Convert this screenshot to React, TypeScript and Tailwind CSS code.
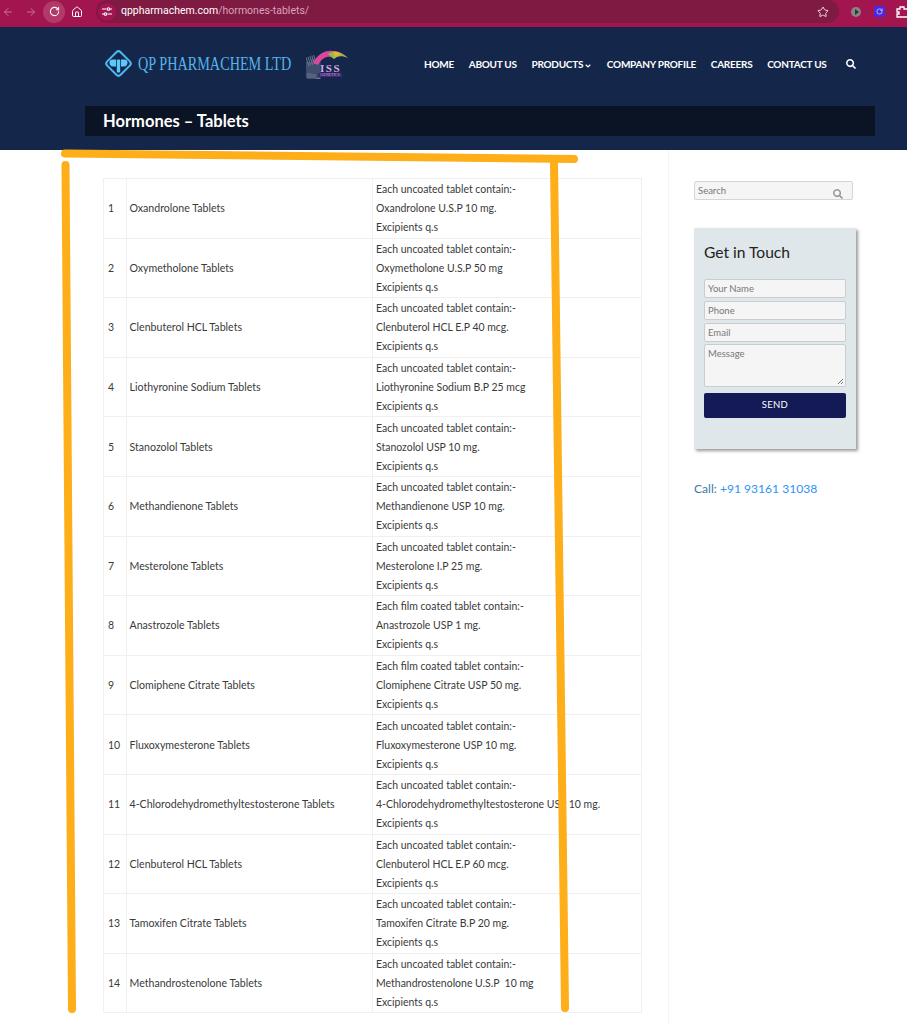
import React from 'react';
import { ArrowLeft, ArrowRight, RotateCw, House, Star } from 'lucide-react';
import { FaSearch, FaAngleDown } from 'react-icons/fa';

const rows = [
  ['Oxandrolone Tablets', 'Each uncoated tablet contain:-', 'Oxandrolone U.S.P 10 mg.'],
  ['Oxymetholone Tablets', 'Each uncoated tablet contain:-', 'Oxymetholone U.S.P 50 mg'],
  ['Clenbuterol HCL Tablets', 'Each uncoated tablet contain:-', 'Clenbuterol HCL E.P 40 mcg.'],
  ['Liothyronine Sodium Tablets', 'Each uncoated tablet contain:-', 'Liothyronine Sodium B.P 25 mcg'],
  ['Stanozolol Tablets', 'Each uncoated tablet contain:-', 'Stanozolol USP 10 mg.'],
  ['Methandienone Tablets', 'Each uncoated tablet contain:-', 'Methandienone USP 10 mg.'],
  ['Mesterolone Tablets', 'Each uncoated tablet contain:-', 'Mesterolone I.P 25 mg.'],
  ['Anastrozole Tablets', 'Each film coated tablet contain:-', 'Anastrozole USP 1 mg.'],
  ['Clomiphene Citrate Tablets', 'Each film coated tablet contain:-', 'Clomiphene Citrate USP 50 mg.'],
  ['Fluxoxymesterone Tablets', 'Each uncoated tablet contain:-', 'Fluxoxymesterone USP 10 mg.'],
  ['4-Chlorodehydromethyltestosterone Tablets', 'Each uncoated tablet contain:-', '4-Chlorodehydromethyltestosterone USP 10 mg.'],
  ['Clenbuterol HCL Tablets', 'Each uncoated tablet contain:-', 'Clenbuterol HCL E.P 60 mcg.'],
  ['Tamoxifen Citrate Tablets', 'Each uncoated tablet contain:-', 'Tamoxifen Citrate B.P 20 mg.'],
  ['Methandrostenolone Tablets', 'Each uncoated tablet contain:-', 'Methandrostenolone U.S.P  10 mg'],
];

const navItems = ['HOME', 'ABOUT US', 'PRODUCTS', 'COMPANY PROFILE', 'CAREERS', 'CONTACT US'];

const BrowserBar = () => (
  <div className="h-[27px] shrink-0 bg-[#a3154f] flex items-start text-[#e9c3d3]">
    <div className="flex items-center h-[23px] pl-[2px] w-[96px] shrink-0">
      <ArrowLeft size={12} className="text-[#cf6f96]" />
      <ArrowRight size={12} className="ml-[11px] text-[#cf6f96]" />
      <div className="ml-[6px] w-[22px] h-[22px] rounded-full bg-[#b23a6b] flex items-center justify-center">
        <RotateCw size={11} className="text-white" strokeWidth={2.2} />
      </div>
      <House size={12} className="ml-[6px] text-white" />
    </div>
    <div className="w-[743px] h-[23px] rounded-full bg-[#7f1a42] flex items-center shrink-0">
      <div className="w-[18px] h-[18px] ml-[2px] rounded-full bg-[#a3154f] flex items-center justify-center">
        <svg width="10" height="9" viewBox="0 0 10 9" fill="none" stroke="#ffffff" strokeWidth="1.100">
          <path d="M0 2h4.500M8 2h2M0 7h2M5.500 7H10" />
          <circle cx="6.500" cy="2" r="1.300" />
          <circle cx="3.500" cy="7" r="1.300" />
        </svg>
      </div>
      <div className="ml-[5px] text-[10.5px] leading-none font-['Roboto',sans-serif]">
        <span className="text-white">qppharmachem.com</span>
        <span className="text-[#d9a3ba]">/hormones-tablets/</span>
      </div>
      <Star size={12} className="ml-auto mr-[10px] text-[#f2dbe5]" />
    </div>
    <div className="flex items-center h-[23px]">
      <div className="ml-[12px] w-[10px] h-[10px] rounded-full bg-[#858585] flex items-center justify-center">
        <div className="ml-[1px] w-0 h-0 border-y-[3px] border-y-transparent border-l-[4px] border-l-[#333333]" />
      </div>
      <div className="ml-[13px] w-[11px] h-[11px] rounded-[2px] bg-[#4a2ae0] flex items-center justify-center">
        <RotateCw size={7} className="text-white" />
      </div>
      <svg width="14" height="12" viewBox="0 0 14 12" fill="none" stroke="#ffffff" strokeWidth="1.300" className="ml-[11px]">
        <path d="M1 3h3V1h4v2h5v8H1V8h2V6H1z" />
      </svg>
    </div>
  </div>
);

const Logo = () => (
  <div className="flex items-center">
    <svg width="31" height="31" viewBox="0 0 31 31" className="shrink-0">
      <rect x="6" y="6" width="19" height="19" rx="3" transform="rotate(45 15.5 15.5)" fill="none" stroke="#4db8f0" strokeWidth="2" />
      <path d="M13 11.500V18.500H10C7.500 18.500 6.500 16.500 6.500 14.500C6.500 12.500 7.500 11.500 9.500 11.500z" fill="#5ac8fa" />
      <path d="M18 11.500V18.500H21C23.500 18.500 24.500 16.500 24.500 14.500C24.500 12.500 23.500 11.500 21.500 11.500z" fill="#5ac8fa" />
      <rect x="13.800" y="11.500" width="3.400" height="13" rx="1" fill="#5ac8fa" />
    </svg>
    <span className="ml-[4px] text-[19.5px] leading-none text-[#56b4ea] font-['Liberation_Serif',serif] whitespace-nowrap inline-block w-[154px] origin-left scale-x-[0.73]">
      QP PHARMACHEM LTD
    </span>
    <div className="ml-[14px] relative w-[44px] h-[30px]">
      <svg width="44" height="30" viewBox="0 0 44 30" className="absolute inset-0">
        <path d="M1 13L10 10L10 29L1 29z" fill="none" stroke="#d8d8e8" strokeWidth="9" strokeDasharray="1 1" opacity="0.45" />
        <path d="M7 14C12 5 19 1 27 2C33 2 38 5 42 9C37 6 32 6 28 10C24 6 17 7 12 16z" fill="#d8489a" />
        <path d="M22 5C27 1 34 2 42 9C36 6 31 7 28 10z" fill="#8bbf4a" />
        <path d="M27 3C30 2 33 3 35 5L29 8z" fill="#e8b13a" />
      </svg>
      <span className="absolute left-[14px] top-[14px] text-[11px] leading-none font-bold tracking-[1.5px] text-[#d7a6e6] font-['Liberation_Serif',serif]">ISS</span>
      <span className="absolute left-[12px] top-[24px] w-[24px] h-[4px] bg-[#3d2a6e] text-[4px] leading-[4px] text-center text-[#d7a6e6] font-['Liberation_Serif',serif]">GENETICS</span>
    </div>
  </div>
);

const Header = () => (
  <header className="h-[123px] shrink-0 bg-[#14274b] flex flex-col">
    <div className="h-[79px] flex items-start pl-[103px] pt-[21px]">
      <Logo />
      <nav className="ml-[74px] pt-[1px] flex items-center h-[31px] text-white text-[10px] font-bold tracking-[-0.25px]">
        {navItems.map((item) => (
          <span key={item} className="mr-[14.7px] flex items-center whitespace-nowrap">
            {item}
            {item === 'PRODUCTS' && <FaAngleDown size={8} className="ml-[1px] mt-[3px]" />}
          </span>
        ))}
        <FaSearch size={10} className="ml-[5px]" />
      </nav>
    </div>
    <div className="ml-[85px] w-[790px] h-[30px] bg-[#0a1424] pl-[18px] flex items-center">
      <h1 className="pt-[1px] text-[16.5px] font-bold text-white leading-none">Hormones – Tablets</h1>
    </div>
  </header>
);

const ProductTable = () => (
  <table className="w-[538px] table-fixed border-collapse text-[10.48px] leading-[19px] text-[#3a3a3a] self-start shrink-0">
    <colgroup>
      <col className="w-[23px]" />
      <col className="w-[246px]" />
      <col className="w-[269px]" />
    </colgroup>
    <tbody>
      {rows.map((row, i) => (
        <tr key={i} className="h-[59.6px]">
          <td className="border border-[#f0f0f0] pl-[4px] pt-[1px] align-middle">{i + 1}</td>
          <td className="border border-[#f0f0f0] pl-[2.5px] pt-[1px] align-middle whitespace-nowrap text-[10.6px]">{row[0]}</td>
          <td className="border border-[#f0f0f0] pl-[3px] pt-[1px] align-middle whitespace-pre">
            <div>{row[1]}</div>
            <div>{row[2]}</div>
            <div>Excipients q.s</div>
          </td>
        </tr>
      ))}
    </tbody>
  </table>
);

const Field = ({ label }: { label: string }) => (
  <div className="h-[19px] bg-[#f5f5f5] border border-[#c9cdd0] rounded-[2px] pl-[3px] text-[9.5px] leading-[17px] text-[#777]">{label}</div>
);

const Sidebar = () => (
  <aside className="ml-[26px] border-l border-[#f4f4f4] pl-[25px] pt-[31px] flex-1">
    <div className="w-[159px] h-[19px] bg-[#f5f5f5] border border-[#d6d6d6] rounded-[2px] pl-[3px] flex items-center justify-between text-[9.5px] text-[#777]">
      <span className="pt-[1px]">Search</span>
      <FaSearch size={10} className="mr-[9px] mt-[6px] text-[#999]" />
    </div>
    <div className="mt-[28px] w-[162px] h-[221px] bg-[#dfe7ea] shadow-[2px_2px_3px_rgba(0,0,0,0.4)] px-[10px] pt-[14px]">
      <h2 className="text-[15.6px] leading-[20px] text-[#222] font-normal">Get in Touch</h2>
      <div className="mt-[17px] flex flex-col gap-[3px]">
        <Field label="Your Name" />
        <Field label="Phone" />
        <Field label="Email" />
        <div className="-mt-[1px] h-[43px] relative bg-[#f5f5f5] border border-[#c9cdd0] rounded-[2px] pl-[3px] pt-[2px] text-[9.5px] leading-[14px] text-[#777]">
          Message
          <svg width="7" height="7" viewBox="0 0 7 7" className="absolute right-[1px] bottom-[1px]">
            <path d="M1 6L6 1M4 6L6 4" stroke="#555" strokeWidth="0.8" />
          </svg>
        </div>
      </div>
      <button className="mt-[6px] w-full h-[25px] bg-[#141a56] rounded-[2px] text-white text-[9.5px] tracking-[0.3px]">SEND</button>
    </div>
    <p className="mt-[32px] text-[12.1px] leading-[16px] text-[#3d79a8]">
      Call: <span className="text-[#2f93f5]">+91 93161 31038</span>
    </p>
  </aside>
);

// marker strokes drawn over the page in the screenshot
const Annotations = () => (
  <svg width="907" height="1024" viewBox="0 0 907 1024" className="absolute left-0 top-0 pointer-events-none">
    <g stroke="#fdae18" strokeWidth="8" strokeLinecap="round" fill="none">
      <path d="M65 153.500L574 159" />
      <path d="M65.500 165L72 1009" />
      <path d="M554 161L565 1008" />
    </g>
  </svg>
);

export default function App() {
  return (
    <div className="relative h-[1024px] w-[907px] overflow-hidden bg-white font-['Lato',sans-serif] flex flex-col">
      <BrowserBar />
      <Header />
      <main className="flex-1 flex pl-[103px]">
        <div className="pt-[28px] shrink-0 flex">
          <ProductTable />
        </div>
        <Sidebar />
      </main>
      <Annotations />
    </div>
  );
}
